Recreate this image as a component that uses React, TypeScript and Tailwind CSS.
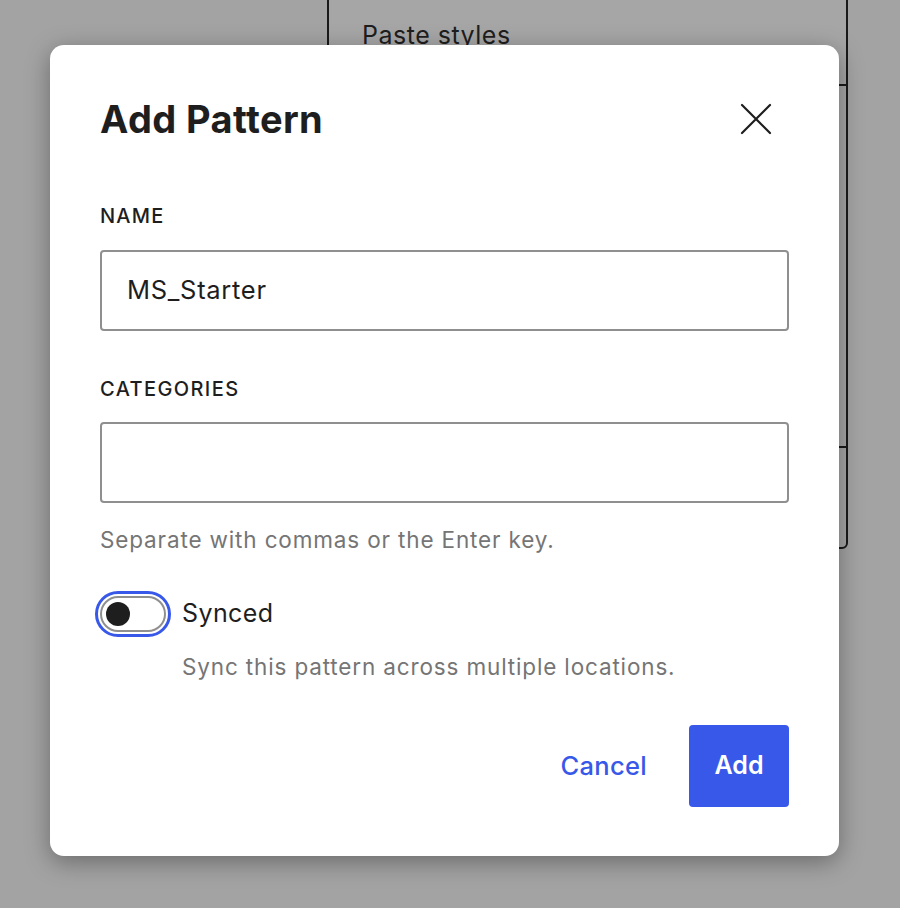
const font = { fontFamily: 'Inter, "Noto Sans", sans-serif' };

function Toggle() {
  return (
    <span className="flex items-center justify-center w-[76px] h-[46px] rounded-full border-[3px] border-[#3858e9] bg-white shrink-0">
      <span className="flex items-center w-[66px] h-[36px] rounded-full border-2 border-[#8f8f8f] bg-white pl-[4px]">
        <span className="block w-[24px] h-[24px] rounded-full bg-[#1e1e1e]" />
      </span>
    </span>
  );
}

export default function App() {
  return (
    <div className="relative w-[900px] h-[908px] overflow-hidden bg-[#a3a3a3]" style={font}>
      {/* menu behind the modal */}
      <div className="absolute left-[327px] top-[-4px] w-[521px] h-[553px] border-2 border-[#1a1a1a] rounded-br-[6px] bg-[#a6a6a6]">
        <div className="h-[88px] border-b-2 border-[#1a1a1a] pl-[33px] pt-[19px] text-[25px] tracking-[0.5px] text-[#1e1e1e]">
          Paste styles
        </div>
        <div className="h-[362px] border-b-2 border-[#1a1a1a]" />
      </div>

      <div className="absolute left-[50px] top-[45px] w-[789px] h-[811px] rounded-[14px] bg-white shadow-[0_6px_24px_rgba(0,0,0,0.35)] px-[50px] pt-[52px]">
        <div className="flex items-center justify-between">
          <h1 className="text-[38px] leading-[44px] font-bold text-[#1e1e1e] tracking-[0.4px]">Add Pattern</h1>
          <button className="w-[44px] h-[44px] flex items-center justify-center mr-[11px] text-[#1e1e1e]">
            <svg width="32" height="32" viewBox="0 0 32 32" fill="none" stroke="currentColor" strokeWidth="2.2" strokeLinecap="round">
              <path d="M2 2L30 30M30 2L2 30" />
            </svg>
          </button>
        </div>

        <div className="mt-[62px] text-[20px] leading-[26px] font-medium text-[#1e1e1e] tracking-[1.2px]">NAME</div>
        <div className="mt-[21px] h-[81px] rounded-[4px] border-2 border-[#8f8f8f] flex items-center px-[25px] text-[25.5px] tracking-[0.7px] text-[#1e1e1e]">
          MS_Starter
        </div>

        <div className="mt-[45px] text-[20px] leading-[26px] font-medium text-[#1e1e1e] tracking-[1.4px]">CATEGORIES</div>
        <div className="mt-[20px] h-[81px] rounded-[4px] border-2 border-[#8f8f8f]" />
        <p className="mt-[23px] text-[22.5px] leading-[28px] text-[#757575] tracking-[0.85px]">Separate with commas or the Enter key.</p>

        <div className="mt-[37px] -ml-[5px] flex items-center gap-[11px]">
          <Toggle />
          <span className="text-[25px] tracking-[0.4px] text-[#1e1e1e]">Synced</span>
        </div>
        <p className="mt-[16px] ml-[82px] text-[22.5px] leading-[28px] text-[#757575] tracking-[0.85px]">Sync this pattern across multiple locations.</p>

        <div className="mt-[44px] flex items-center justify-end gap-[42px]">
          <button className="text-[25.5px] font-medium tracking-[0.3px] text-[#3858e9]">Cancel</button>
          <button className="w-[100px] h-[82px] rounded-[4px] bg-[#3858e9] text-white text-[25px] font-semibold">Add</button>
        </div>
      </div>
    </div>
  );
}
